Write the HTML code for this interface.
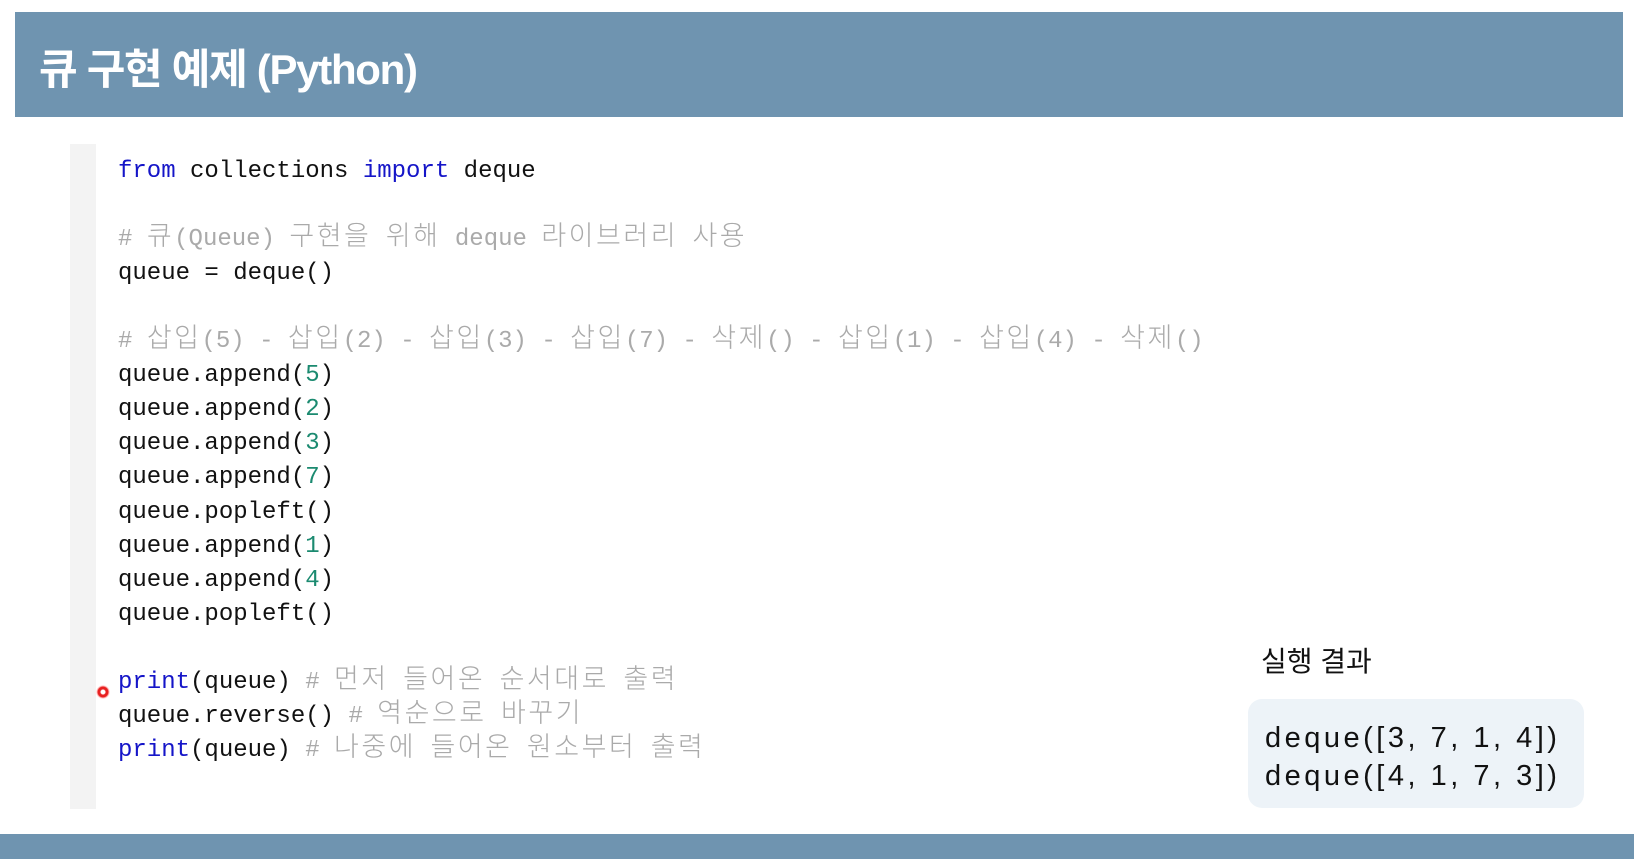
<!DOCTYPE html>
<html><head><meta charset="utf-8"><style>
body{margin:0;width:1634px;height:859px;background:#fff;position:relative;overflow:hidden;font-family:"Liberation Sans","Noto Sans CJK KR",sans-serif}
.hdr{position:absolute;left:15px;top:12px;width:1608px;height:105px;background:#6f94b0}
.ttl{position:absolute;left:39px;top:36px;color:#fff;font-size:42px;font-weight:bold;letter-spacing:-1.3px;font-family:"Liberation Sans Narrow","Liberation Sans","Noto Sans CJK KR",sans-serif}
.bar{position:absolute;left:70px;top:144px;width:26px;height:665px;background:#f3f3f3}
.ln{position:absolute;left:118px;font-family:"Liberation Mono","Noto Sans CJK KR",monospace;font-size:24px;line-height:34px;color:#111;white-space:pre}
.h{letter-spacing:2.5px;font-size:27px;font-weight:300;line-height:20px}
.k{color:#1515c8}.n{color:#1b8a70}.c{color:#aaa}
.bot{position:absolute;left:0;top:834px;width:1634px;height:25px;background:#6f94b0}
.lbl{position:absolute;left:1261px;top:640px;font-size:28px;color:#111}
.box{position:absolute;left:1248px;top:699px;width:336px;height:109px;background:#edf3f8;border-radius:14px}
.out{position:absolute;left:1265px;font-size:29px;color:#111;line-height:38px;white-space:pre;letter-spacing:3.5px;font-family:"Liberation Sans","Noto Sans CJK KR",sans-serif}
.dot{position:absolute;left:96px;top:685px;width:14px;height:14px;border-radius:50%;background:radial-gradient(circle,#fff 0 2px,#e82020 3px 5px,rgba(255,80,80,.4) 6px,rgba(255,120,120,0) 7px)}
</style></head><body>
<div class="hdr"></div>
<div class="ttl">큐 구현 예제 (Python)</div>
<div class="bar"></div>
<div class="ln" style="top:155px"><span class="k">from</span> collections <span class="k">import</span> deque</div>
<div class="ln c" style="top:223px"># <span class="h">큐</span>(Queue) <span class="h">구현을</span> <span class="h">위해</span> deque <span class="h">라이브러리</span> <span class="h">사용</span></div>
<div class="ln" style="top:257px">queue = deque()</div>
<div class="ln c" style="top:325px"># <span class="h">삽입</span>(5) - <span class="h">삽입</span>(2) - <span class="h">삽입</span>(3) - <span class="h">삽입</span>(7) - <span class="h">삭제</span>() - <span class="h">삽입</span>(1) - <span class="h">삽입</span>(4) - <span class="h">삭제</span>()</div>
<div class="ln" style="top:359px">queue.append(<span class="n">5</span>)</div>
<div class="ln" style="top:393px">queue.append(<span class="n">2</span>)</div>
<div class="ln" style="top:427px">queue.append(<span class="n">3</span>)</div>
<div class="ln" style="top:461px">queue.append(<span class="n">7</span>)</div>
<div class="ln" style="top:496px">queue.popleft()</div>
<div class="ln" style="top:530px">queue.append(<span class="n">1</span>)</div>
<div class="ln" style="top:564px">queue.append(<span class="n">4</span>)</div>
<div class="ln" style="top:598px">queue.popleft()</div>
<div class="ln" style="top:666px"><span class="k">print</span>(queue) <span class="c"># <span class="h">먼저</span> <span class="h">들어온</span> <span class="h">순서대로</span> <span class="h">출력</span></span></div>
<div class="ln" style="top:700px">queue.reverse() <span class="c"># <span class="h">역순으로</span> <span class="h">바꾸기</span></span></div>
<div class="ln" style="top:734px"><span class="k">print</span>(queue) <span class="c"># <span class="h">나중에</span> <span class="h">들어온</span> <span class="h">원소부터</span> <span class="h">출력</span></span></div>
<div class="dot"></div>
<div class="lbl">실행 결과</div>
<div class="box"></div>
<div class="out" style="top:719px">deque([3, 7, 1, 4])</div>
<div class="out" style="top:757px">deque([4, 1, 7, 3])</div>
<div class="bot"></div>
</body></html>
